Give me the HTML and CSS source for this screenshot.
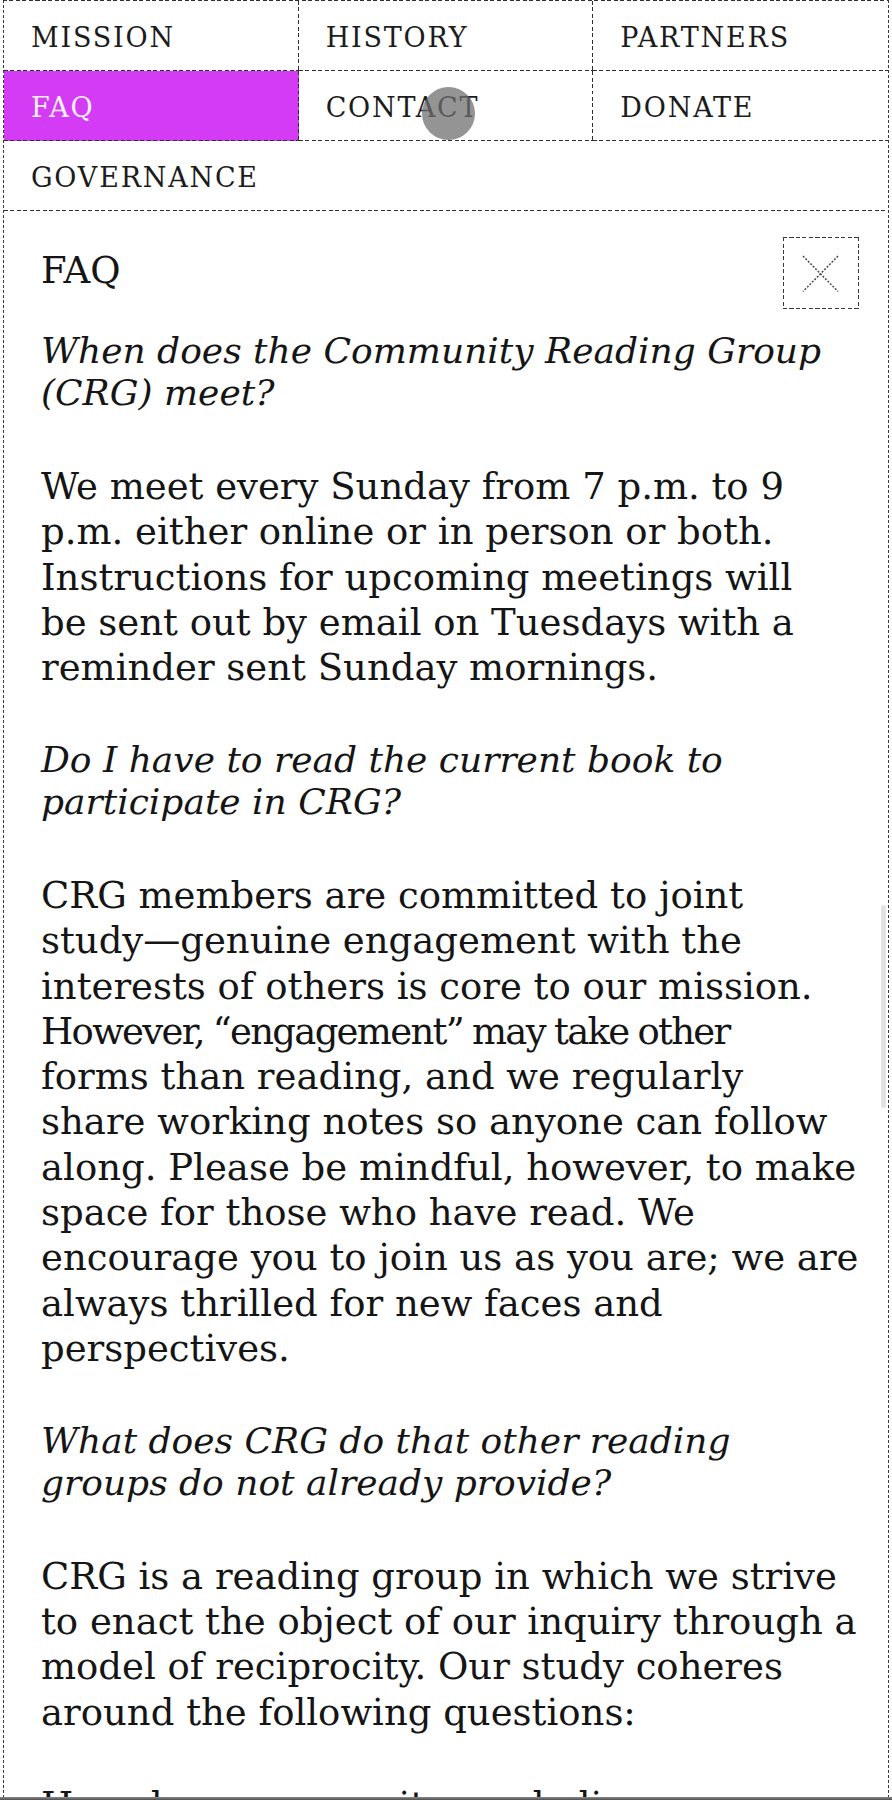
FILE: index.html
```html
<!DOCTYPE html>
<html lang="en">
<head>
<meta charset="utf-8">
<title>FAQ — Community Reading Group</title>
<link rel="stylesheet" href="styles.css">
</head>
<body>
<div class="page">
  <nav class="nav">
    <a class="nav-item" href="#">MISSION</a>
    <a class="nav-item" href="#">HISTORY</a>
    <a class="nav-item nav-item--last" href="#">PARTNERS</a>
    <a class="nav-item is-active" href="#">FAQ</a>
    <a class="nav-item" href="#">CONTACT</a>
    <a class="nav-item nav-item--last" href="#">DONATE</a>
    <a class="nav-item nav-item--wide" href="#">GOVERNANCE</a>
    <span class="touch"></span>
  </nav>

  <section class="panel">
    <header class="panel-head">
      <h1 class="panel-title">FAQ</h1>
      <button class="close" type="button" aria-label="Close">
        <svg class="close-icon" width="76" height="72" viewBox="0 0 76 72">
          <line x1="20" y1="19" x2="55" y2="54.5"/>
          <line x1="55" y1="19" x2="20" y2="54.5"/>
        </svg>
      </button>
    </header>

    <p class="q">When does the Community Reading Group<br>(CRG) meet?</p>
    <p class="a">We meet every Sunday from 7 p.m. to 9<br>p.m. either online or in person or both.<br>Instructions for upcoming meetings will<br>be sent out by email on Tuesdays with a<br>reminder sent Sunday mornings.</p>

    <p class="q">Do I have to read the current book to<br>participate in CRG?</p>
    <p class="a">CRG members are committed to joint<br>study—genuine engagement with the<br>interests of others is core to our mission.<br><span class="tight">However, “engagement” may take other</span><br>forms than reading, and we regularly<br>share working notes so anyone can follow<br>along. Please be mindful, however, to make<br>space for those who have read. We<br>encourage you to join us as you are; we are<br>always thrilled for new faces and<br>perspectives.</p>

    <p class="q">What does CRG do that other reading<br>groups do not already provide?</p>
    <p class="a">CRG is a reading group in which we strive<br>to enact the object of our inquiry through a<br>model of reciprocity. Our study coheres<br>around the following questions:</p>

    <p class="a">How does community symbolize</p>

    <div class="scroll-thumb"></div>
  </section>
</div>
<div class="screen-edge"></div>
</body>
</html>
```
FILE: styles.css
```css
html, body {
  margin: 0;
  padding: 0;
  background: #ffffff;
}

body {
  color: #151515;
  font-family: "DejaVu Serif", "Liberation Serif", serif;
}

/* dashed rules are drawn as gradients so the dash length matches */
.page {
  margin: 0 3px;
  padding: 1px 1px 0 1px;
  height: 100vh;
  box-sizing: border-box;
  display: flex;
  flex-direction: column;
  overflow: hidden;
  background:
    repeating-linear-gradient(90deg, #303030 0 4px, transparent 4px 6.5px) left top / 100% 1px no-repeat,
    repeating-linear-gradient(180deg, #3a3a3a 0 3px, transparent 3px 5px) left top / 1px 100% no-repeat,
    repeating-linear-gradient(180deg, #3a3a3a 0 3px, transparent 3px 5px) right top / 1px 100% no-repeat;
}

/* ---------- navigation grid ---------- */
.nav {
  position: relative;
  display: grid;
  grid-template-columns: repeat(3, 1fr);
  flex: none;
}

.nav-item {
  box-sizing: border-box;
  height: 70px;
  display: flex;
  align-items: center;
  padding: 3px 0 0 27px;
  background:
    repeating-linear-gradient(90deg, #2e2e2e 0 4px, transparent 4px 6.5px) left bottom / 100% 1px no-repeat,
    repeating-linear-gradient(180deg, #2e2e2e 0 4px, transparent 4px 6.5px) right top / 1px 100% no-repeat;
  font-family: "DejaVu Serif", serif;
  font-size: 27px;
  line-height: 1;
  letter-spacing: 1.8px;
  color: #1c1c1c;
  text-decoration: none;
}

.nav-item--last,
.nav-item--wide {
  background:
    repeating-linear-gradient(90deg, #2e2e2e 0 4px, transparent 4px 6.5px) left bottom / 100% 1px no-repeat;
}

.nav-item--wide {
  grid-column: 1 / -1;
}

.nav-item.is-active {
  background-color: #d33cf4;
  color: #fdf0ff;
}

.touch {
  position: absolute;
  left: 418px;
  top: 86px;
  width: 53px;
  height: 53px;
  border-radius: 50%;
  background: rgba(110, 110, 110, 0.74);
  pointer-events: none;
}

/* ---------- FAQ panel ---------- */
.panel {
  position: relative;
  flex: 1;
  overflow: hidden;
  padding: 26px 29px 0 37px;
}

.panel-head {
  display: flex;
  justify-content: space-between;
  align-items: flex-start;
  margin-bottom: 21px;
}

.panel-title {
  margin: 11px 0 0;
  font-family: "DejaVu Serif", serif;
  font-size: 37px;
  line-height: 45.3px;
  font-weight: 400;
}

.close {
  box-sizing: border-box;
  width: 76px;
  height: 72px;
  padding: 0;
  margin: 0;
  border: none;
  display: block;
  cursor: pointer;
  background:
    repeating-linear-gradient(90deg, #3a3a3a 0 4px, transparent 4px 6.5px) left top / 100% 1px no-repeat,
    repeating-linear-gradient(90deg, #3a3a3a 0 4px, transparent 4px 6.5px) left bottom / 100% 1px no-repeat,
    repeating-linear-gradient(180deg, #3a3a3a 0 4px, transparent 4px 6.5px) left top / 1px 100% no-repeat,
    repeating-linear-gradient(180deg, #3a3a3a 0 4px, transparent 4px 6.5px) right top / 1px 100% no-repeat;
}

.close-icon {
  display: block;
}

.close-icon line {
  stroke: #4a4a4a;
  stroke-width: 1.5;
  stroke-dasharray: 2 1.5;
}

.q {
  margin: 0 0 50px;
  font-family: "DejaVu Serif", serif;
  font-style: italic;
  font-size: 36px;
  line-height: 42px;
  white-space: nowrap;
}

.a {
  margin: 0 0 48.5px;
  font-family: "DejaVu Serif", serif;
  font-size: 37px;
  line-height: 45.3px;
  white-space: nowrap;
}

.tight {
  letter-spacing: -1.7px;
  word-spacing: -1px;
}

.scroll-thumb {
  position: absolute;
  right: 2px;
  top: 694px;
  width: 5px;
  height: 203px;
  border-radius: 3px;
  background: #e3e3e3;
}

.screen-edge {
  position: fixed;
  left: 0;
  right: 0;
  bottom: 0;
  height: 3px;
  background: linear-gradient(#8a8a8a, #4e4e4e);
}
```
